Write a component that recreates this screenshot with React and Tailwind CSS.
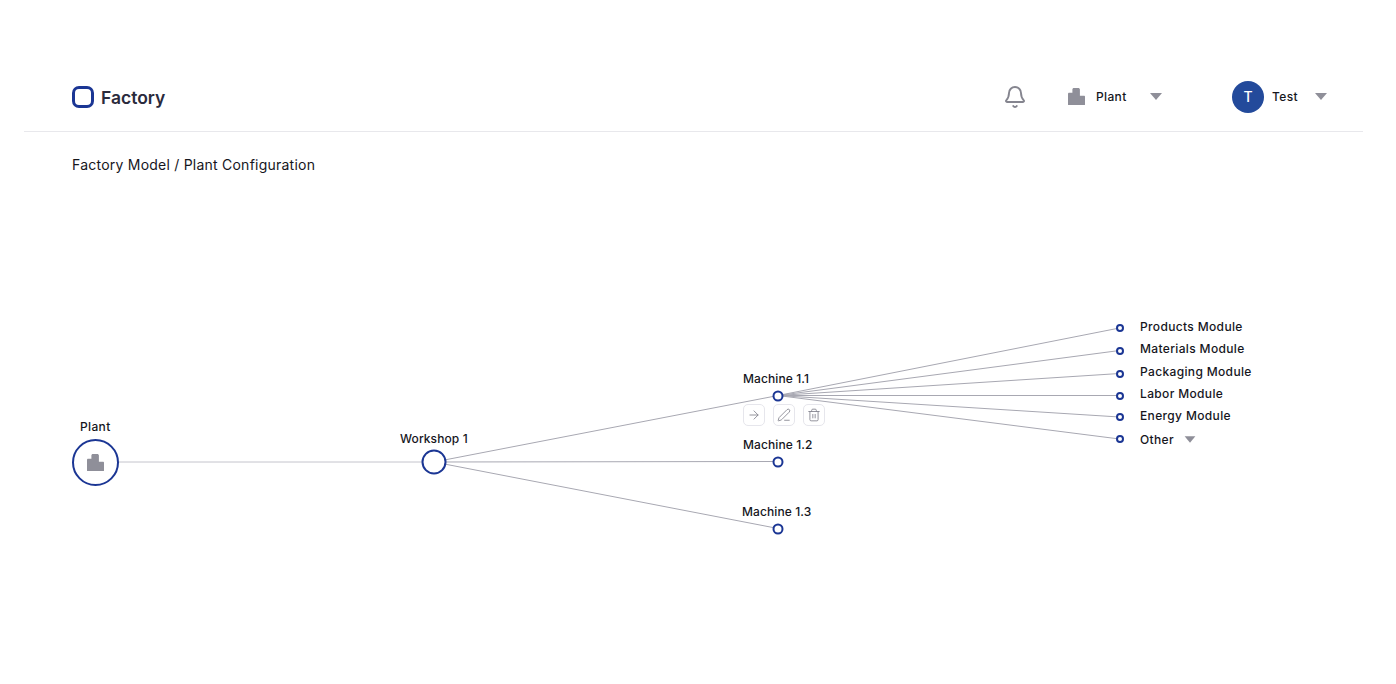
import { ArrowRight, Bell, PenLine, Trash2 } from 'lucide-react'

// page coords of the diagram, canvas starts at y=190
const CANVAS_TOP = 190
const ROOT = { x: 95.5, y: 462 }
const WORKSHOP = { x: 434, y: 462 }
const MACHINES = [
  { label: 'Machine 1.1', x: 778, y: 395.5, labelX: 743, labelY: 379 },
  { label: 'Machine 1.2', x: 778, y: 461.5, labelX: 743, labelY: 445 },
  { label: 'Machine 1.3', x: 778, y: 528.5, labelX: 742, labelY: 512 },
]
const MODULES = [
  { label: 'Products Module', y: 328, labelY: 326.5 },
  { label: 'Materials Module', y: 350.5, labelY: 348.5 },
  { label: 'Packaging Module', y: 373.5, labelY: 372 },
  { label: 'Labor Module', y: 395.5, labelY: 394 },
  { label: 'Energy Module', y: 417, labelY: 415.5 },
  { label: 'Other', y: 439, labelY: 439.5, caret: true },
]
const MODULE_X = 1119.5

function PlantIcon({ className }) {
  return (
    <svg viewBox="0 0 17 17" className={className} fill="currentColor">
      <path d="M0.6 17C0.2 17 0 16.8 0 16.4V6C0 5.2 .5 4.7 1.2 4.7H4.4V1.6C4.4 .6 5 0 6 0H10.2C11.2 0 11.9 .6 11.9 1.6V7.7H16C16.6 7.7 17 8.1 17 8.7V16.4C17 16.8 16.8 17 16.4 17Z" />
    </svg>
  )
}

function Caret({ className = '' }) {
  return <span className={`h-0 w-0 border-x-[6px] border-t-[7px] border-x-transparent border-t-[#8f8f99] ${className}`} />
}

function ActionButton({ children }) {
  return (
    <button className="flex h-[22px] w-[22px] items-center justify-center rounded-[5px] border border-[#e6e6ec] bg-white text-[#85858f]">
      {children}
    </button>
  )
}

function Label({ x, y, tight, children }) {
  return (
    <div
      className={`absolute flex -translate-y-1/2 items-center text-[12px] leading-none font-[550] whitespace-nowrap text-[#16161d] ${tight ? 'tracking-[0.1px]' : 'tracking-[0.35px]'}`}
      style={{ left: x, top: y - CANVAS_TOP }}
    >
      {children}
    </div>
  )
}

function Dot({ x, y, size, className }) {
  return (
    <div
      className={`absolute -translate-x-1/2 -translate-y-1/2 rounded-full border-[#1b3694] bg-white ${className}`}
      style={{ left: x, top: y - CANVAS_TOP, width: size, height: size }}
    />
  )
}

function Links() {
  const m = MACHINES[0]
  return (
    <svg className="absolute inset-0 h-full w-full" fill="none" strokeWidth="1">
      <line x1={ROOT.x} y1={ROOT.y - CANVAS_TOP} x2={WORKSHOP.x} y2={WORKSHOP.y - CANVAS_TOP} stroke="#c4c4cc" />
      {MACHINES.map((n) => (
        <line key={n.label} x1={WORKSHOP.x} y1={WORKSHOP.y - CANVAS_TOP} x2={n.x} y2={n.y - CANVAS_TOP} stroke="#a8a8b2" />
      ))}
      {MODULES.map((n) => (
        <line key={n.label} x1={m.x} y1={m.y - CANVAS_TOP} x2={MODULE_X} y2={n.y - CANVAS_TOP} stroke="#a8a8b2" />
      ))}
    </svg>
  )
}

function Header() {
  return (
    <header className="mr-[33px] ml-6 flex h-[70px] items-center justify-between border-b border-[#e8e8ec] pr-9 pl-12">
      <div className="flex items-center gap-[7px]">
        <div className="h-[22px] w-[22px] rounded-[7px] border-[3px] border-[#1b3694]" />
        <span className="pt-0.5 text-[17.5px] leading-none font-semibold text-[#2a2a3c]">Factory</span>
      </div>
      <div className="flex items-center">
        <Bell className="h-[24px] w-[24px] text-[#85858f]" strokeWidth={1.9} />
        <PlantIcon className="ml-[41px] h-[17px] w-[17px] text-[#8f8f99]" />
        <span className="ml-[11px] w-[54px] pt-px text-[12px] font-[550] tracking-[0.35px] text-[#16161d]">Plant</span>
        <Caret />
        <div className="ml-[70px] flex h-8 w-8 items-center justify-center rounded-full bg-[#234a9b] text-[14px] font-medium text-white">T</div>
        <span className="ml-2 w-[43px] pt-px text-[12px] font-[550] tracking-[0.35px] text-[#16161d]">Test</span>
        <Caret />
      </div>
    </header>
  )
}

export default function App() {
  return (
    <div className="h-[684px] w-[1396px] overflow-hidden bg-white pt-[62px] font-['Inter','Liberation_Sans',sans-serif]">
      <Header />
      <div className="flex h-[58px] items-start pt-[23px] pl-[72px] text-[14px] leading-[20px] tracking-[0.23px] text-[#16161d]">
        Factory Model / Plant Configuration
      </div>
      <div className="relative h-[494px]">
        <Links />

        <Label x={80} y={427}>Plant</Label>
        <div className="absolute top-[249px] left-[72px] flex h-[47px] w-[47px] items-center justify-center rounded-full border-[2.5px] border-[#1b3694] bg-white">
          <PlantIcon className="h-[17px] w-[17px] text-[#8f8f99]" />
        </div>

        <Label x={400} y={438.5} tight>Workshop 1</Label>
        <Dot x={WORKSHOP.x} y={WORKSHOP.y} size={25} className="border-[2.5px]" />

        {MACHINES.map((n) => (
          <div key={n.label}>
            <Label x={n.labelX} y={n.labelY} tight>{n.label}</Label>
            <Dot x={n.x} y={n.y} size={11} className="border-2" />
          </div>
        ))}

        {/* actions of the selected machine */}
        <div className="absolute top-[214px] left-[743px] flex gap-2">
          <ActionButton><ArrowRight size={14} strokeWidth={1.5} /></ActionButton>
          <ActionButton><PenLine size={14} strokeWidth={1.5} /></ActionButton>
          <ActionButton><Trash2 size={14} strokeWidth={1.5} /></ActionButton>
        </div>

        {MODULES.map((n) => (
          <div key={n.label}>
            <Dot x={MODULE_X} y={n.y} size={8} className="border-2" />
            <Label x={1140} y={n.labelY}>
              {n.label}
              {n.caret && <Caret className="ml-[10px] scale-90" />}
            </Label>
          </div>
        ))}
      </div>
    </div>
  )
}
